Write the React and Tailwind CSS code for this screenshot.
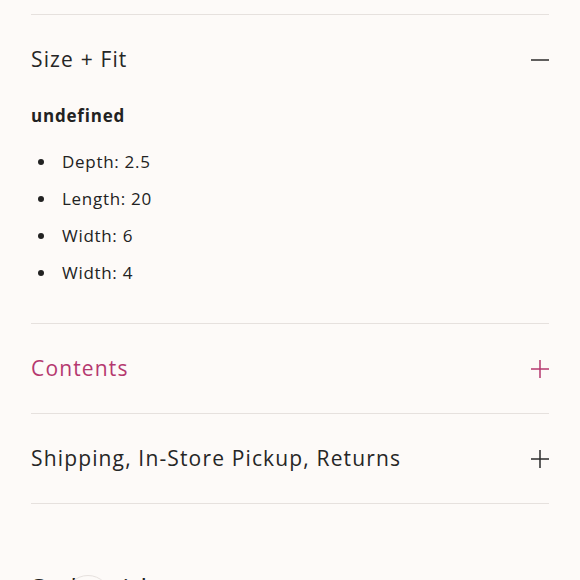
import React from 'react';

const sections = [
  { title: 'Contents', active: true },
  { title: 'Shipping, In-Store Pickup, Returns', active: false },
];

const specs = ['Depth: 2.5', 'Length: 20', 'Width: 6', 'Width: 4'];

function Minus() {
  return (
    <svg width="18" height="18" viewBox="0 0 18 18" className="text-[#2b2b2b]">
      <path d="M0 9h18" stroke="currentColor" strokeWidth="1.5" />
    </svg>
  );
}

function Plus({ className }) {
  return (
    <svg width="18" height="18" viewBox="0 0 18 18" className={className}>
      <path d="M0 9h18M9 0v18" stroke="currentColor" strokeWidth="1.5" />
    </svg>
  );
}

export default function App() {
  return (
    <div className="h-[580px] overflow-hidden bg-[#fdfaf8] font-['Open_Sans',sans-serif] text-[#222]">
      <div className="px-[31px] pt-[14px]">
        {/* Size + Fit - open */}
        <div className="border-t border-[#e6e1de]">
          <button className="flex h-[89px] w-full items-center justify-between">
            <span className="text-[21px] tracking-[1.15px] text-[#262626]">Size + Fit</span>
            <Minus />
          </button>
          <div className="pb-[32px]">
            <p className="text-[17px] font-bold tracking-[0.8px] leading-[24px]">undefined</p>
            <ul className="mt-[15px]">
              {specs.map((s, i) => (
                <li key={i} className="flex h-[37px] items-center text-[17px] tracking-[0.7px]">
                  <span className="ml-[7px] mr-[18px] h-[6px] w-[6px] rounded-full bg-[#222]" />
                  {s}
                </li>
              ))}
            </ul>
          </div>
        </div>

        {sections.map((s) => (
          <div key={s.title} className="border-t border-[#e6e1de]">
            <button className="flex h-[89px] w-full items-center justify-between">
              <span
                className={`text-[21px] tracking-[1.15px] ${s.active ? 'text-[#b5386f]' : 'text-[#262626]'}`}
              >
                {s.title}
              </span>
              <Plus className={s.active ? 'text-[#b5386f]' : 'text-[#2b2b2b]'} />
            </button>
          </div>
        ))}
        <div className="border-t border-[#e6e1de]" />

        <div className="relative pt-[64px]">
          <h2 className="text-[26px] tracking-[1px] text-[#222]">Style with</h2>
          <div className="absolute left-[34px] top-[71px] h-[46px] w-[46px] rounded-full border border-[#e6e1de] bg-[#fdfaf8]" />
        </div>
      </div>
    </div>
  );
}
